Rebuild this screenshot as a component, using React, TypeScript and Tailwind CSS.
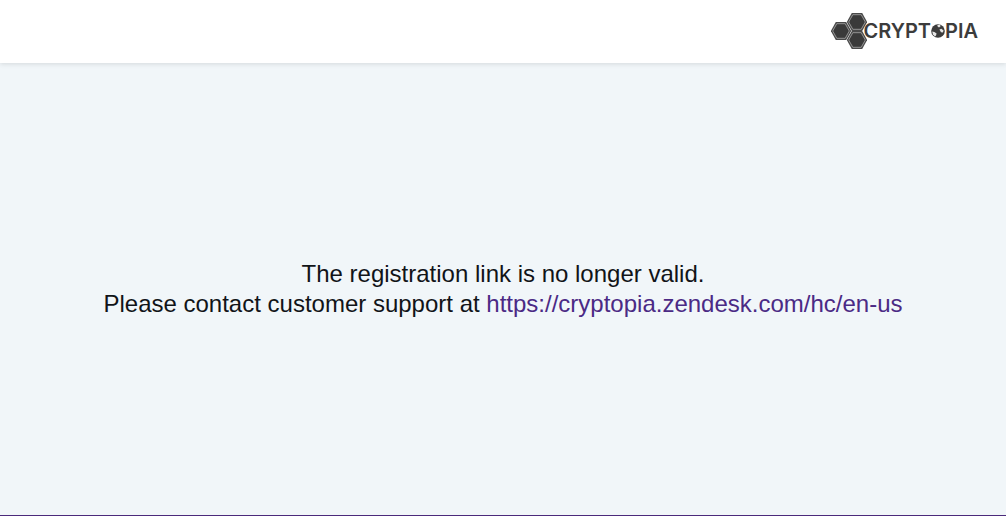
const SUPPORT_URL = "https://cryptopia.zendesk.com/hc/en-us";

// Flat-top hexagon centers inside the 36x36 mark
const HEXAGONS = [
  { x: 26, y: 9 },
  { x: 10, y: 18 },
  { x: 26, y: 27 },
];

function HexMark() {
  return (
    <svg viewBox="0 0 36 36" className="h-9 w-9 shrink-0" aria-hidden>
      {HEXAGONS.map(({ x, y }) => (
        <g key={`${x}-${y}`} transform={`translate(${x} ${y})`}>
          <path d="M-10.2 0L-5.2-9H5.2L10.2 0L5.2 9H-5.2Z" fill="#4a4a4a" />
          <path
            d="M-8.3 0L-4.2-7.3H4.2L8.3 0L4.2 7.3H-4.2Z"
            fill="#3a3a3a"
            stroke="#a8a8a8"
            strokeWidth="0.8"
          />
        </g>
      ))}
    </svg>
  );
}

function Globe() {
  return (
    <svg viewBox="0 0 14 14" className="h-3.5 w-3.5 shrink-0" aria-hidden>
      <circle cx="7" cy="7" r="6.8" fill="#3c3c3c" />
      <path d="M6.4 1L9 .8L9.6 2.2L8 3.4L6.6 2.6Z" fill="#e6e6e6" />
      <path d="M8.4 5.6L10.4 4.8L12.6 6.4L11.8 8.4L10 8.2Z" fill="#e6e6e6" />
      <path d="M1.2 7.4L3.4 8L5.6 9.4L5 11.4L4 12.4L2 10.4Z" fill="#e6e6e6" />
    </svg>
  );
}

function Logo() {
  return (
    <a
      href="/"
      aria-label="Cryptopia"
      className="flex items-center font-['Inter',sans-serif] text-xl leading-5 font-semibold text-[#3c3c3c]"
    >
      <HexMark />
      <span className="-ml-1">CRYPT</span>
      <Globe />
      <span>PIA</span>
    </a>
  );
}

export default function App() {
  return (
    <div className="flex min-h-screen flex-col border-b border-[#4b2a7b] bg-[#f1f6f9] font-['Liberation_Sans',Arial,sans-serif]">
      <header className="flex items-center justify-end bg-white px-7 pt-[13px] pb-3.5 shadow-[0_1px_5px_rgba(0,0,0,0.12)]">
        <Logo />
      </header>
      <main className="flex flex-1 flex-col items-center justify-center px-4 text-center text-2xl leading-[30px] text-[#111418]">
        <p>The registration link is no longer valid.</p>
        <p>
          Please contact customer support at{" "}
          <a href={SUPPORT_URL} className="text-[#4b2a85]">
            {SUPPORT_URL}
          </a>
        </p>
      </main>
    </div>
  );
}
